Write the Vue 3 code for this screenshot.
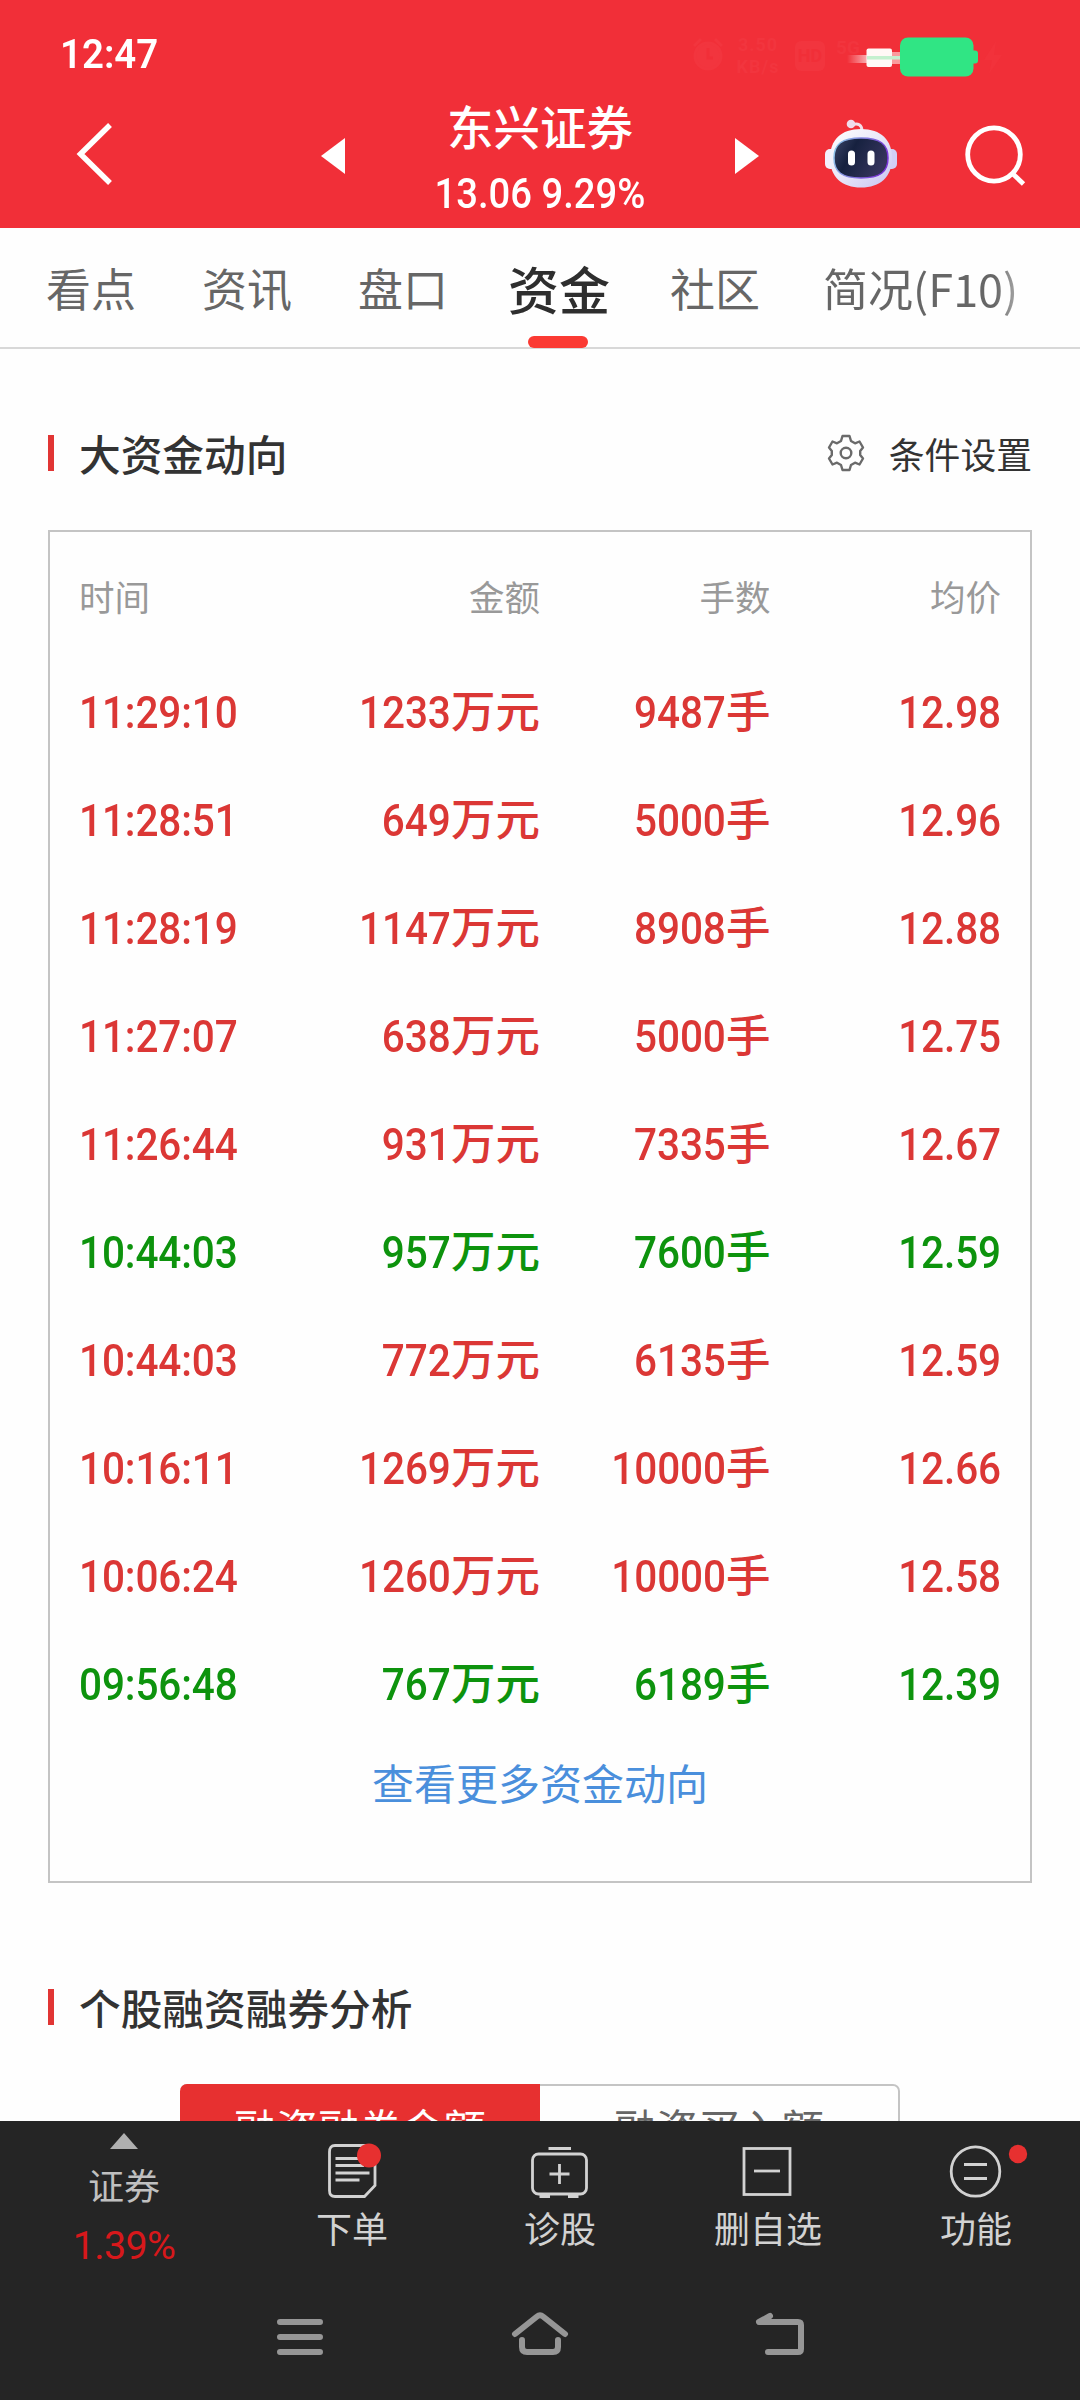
<template>
  <div class="page">
    <header class="top">
      <div class="status-bar">
        <span class="clock">12:47</span>
        <div class="status-right">
          <svg class="alarm" viewBox="0 0 30 32">
            <circle cx="15" cy="18" r="13" />
            <path d="M1 8 L8 1 M29 8 L22 1" />
            <path class="hand" d="M15 10 V20 H20" />
          </svg>
          <div class="speed">
            <span>3.50</span>
            <span>KB/s</span>
          </div>
          <span class="hd">HD</span>
          <span class="net">5G</span>
          <svg class="battery" viewBox="0 0 164 44">
            <defs>
              <linearGradient id="trail" x1="0" y1="0" x2="1" y2="0">
                <stop offset="0" stop-color="#fff" stop-opacity="0" />
                <stop offset="1" stop-color="#fff" stop-opacity="0.6" />
              </linearGradient>
            </defs>
            <rect x="8" y="17" width="20" height="8" fill="url(#trail)" />
            <rect x="52" y="14" width="10" height="12" fill="#fa9b9d" />
            <rect x="27.500" y="10.500" width="25.500" height="18.500" rx="2" fill="#fff8f6" />
            <rect x="28" y="18" width="34" height="3.500" fill="#c4f0cf" />
            <rect x="61" y="-0.500" width="73.500" height="39" rx="8" fill="#30e584" />
            <rect x="131" y="12.500" width="8" height="13" rx="3" fill="#30e584" />
            <path d="M157 3 L145 22 H153 L150 36 L163 17 H155 Z" fill="#f2323b" />
          </svg>
        </div>
      </div>

      <div class="nav">
        <svg class="back" viewBox="0 0 40 64">
          <path d="M35 3 L5.500 32 L35 61" />
        </svg>
        <div class="stock">
          <svg class="arrow" viewBox="0 0 24 36"><path d="M0 18 L24 0 V36 Z" /></svg>
          <div class="stock-info">
            <h1>东兴证券</h1>
            <p>13.06 9.29%</p>
          </div>
          <svg class="arrow" viewBox="0 0 24 36"><path d="M24 18 L0 0 V36 Z" /></svg>
        </div>
        <svg class="robot" viewBox="0 0 72 70">
          <defs>
            <linearGradient id="shell" x1="0" y1="0" x2="1" y2="1">
              <stop offset="0" stop-color="#ffffff" />
              <stop offset="0.5" stop-color="#e9e6f8" />
              <stop offset="1" stop-color="#c6c4f2" />
            </linearGradient>
            <linearGradient id="rim" x1="0" y1="0" x2="1" y2="0.3">
              <stop offset="0" stop-color="#8fd0e8" />
              <stop offset="1" stop-color="#7a35d8" />
            </linearGradient>
            <linearGradient id="screen" x1="0" y1="0" x2="1" y2="0.4">
              <stop offset="0" stop-color="#3c4568" />
              <stop offset="0.4" stop-color="#16213f" />
              <stop offset="1" stop-color="#35345c" />
            </linearGradient>
          </defs>
          <path d="M27 6 C33 3.500 37 6 37 12" fill="none" stroke="#f4dfe9" stroke-width="3" />
          <circle cx="26" cy="5" r="4.300" fill="#f0dcec" />
          <rect x="0" y="30" width="12" height="20" rx="5" fill="#f3effc" />
          <rect x="60" y="30" width="12" height="20" rx="5" fill="#d2cff5" />
          <path
            d="M36 10 C56 10 67 21 67 39 C67 58 55 68.500 36 68.500 C17 68.500 5 58 5 39 C5 21 16 10 36 10 Z"
            fill="url(#shell)"
          />
          <path
            d="M36 19 C55 19 63 25 63 39 C63 53 55 59 36 59 C17 59 9 53 9 39 C9 25 17 19 36 19 Z"
            fill="url(#screen)"
            stroke="url(#rim)"
            stroke-width="1.500"
          />
          <rect x="23" y="31.500" width="7" height="15" rx="3.500" fill="#fff" />
          <rect x="42.500" y="31.500" width="7" height="15" rx="3.500" fill="#fff" />
        </svg>
        <svg class="search" viewBox="0 0 62 62">
          <ellipse cx="30" cy="29.500" rx="26.300" ry="26.600" />
          <path d="M48.500 48.500 L59.500 59" />
        </svg>
      </div>
    </header>

    <nav class="tabs">
      <span
        v-for="tab in tabs"
        :key="tab"
        class="tab"
        :class="{ active: tab === activeTab }"
        @click="activeTab = tab"
      >{{ tab }}</span>
    </nav>

    <main class="content">
      <div class="section-head">
        <h2>大资金动向</h2>
        <div class="setting">
          <svg viewBox="0 0 36 36">
            <path
              d="M14.500 1 H21.500 L23 6 L27 8.300 L31.500 6.500 L35 12.500 L32.200 16 V20 L35 23.500 L31.500 29.500 L27 27.700 L23 30 L21.500 35 H14.500 L13 30 L9 27.700 L4.500 29.500 L1 23.500 L3.800 20 V16 L1 12.500 L4.500 6.500 L9 8.300 L13 6 Z"
            />
            <circle cx="18" cy="18" r="5.300" />
          </svg>
          <span>条件设置</span>
        </div>
      </div>

      <div class="fund-box">
        <div class="row head">
          <span>时间</span>
          <span>金额</span>
          <span>手数</span>
          <span>均价</span>
        </div>
        <div v-for="(item, i) in list" :key="i" class="row" :class="item.type">
          <span><b>{{ item.time }}</b></span>
          <span><b>{{ item.amount }}</b>万元</span>
          <span><b>{{ item.lots }}</b>手</span>
          <span><b>{{ item.price }}</b></span>
        </div>
        <div class="more">查看更多资金动向</div>
      </div>

      <div class="section-head second">
        <h2>个股融资融券分析</h2>
      </div>
      <div class="segment">
        <span class="seg on">融资融券金额</span>
        <span class="seg">融资买入额</span>
      </div>
    </main>

    <footer class="bottom">
      <div class="tools">
        <div class="index">
          <svg viewBox="0 0 28 16"><path d="M14 0 L28 16 H0 Z" /></svg>
          <span class="name">证券</span>
          <span class="rate">1.39%</span>
        </div>
        <div class="tool">
          <svg viewBox="0 0 60 60">
            <path d="M13 6.500 H46 Q53 6.500 53 13 V46.500 L42.500 57.500 H13 Q7.500 57.500 7.500 51.500 V13 Q7.500 6.500 13 6.500 Z" />
            <path d="M13.500 19.500 H38 M13.500 26.500 H42 M13.500 34 H47.500 M13.500 41 H37.500" />
            <circle class="dot" cx="47" cy="16.500" r="12" />
          </svg>
          <span>下单</span>
        </div>
        <div class="tool">
          <svg viewBox="0 0 60 60">
            <rect x="2.500" y="15" width="54" height="40" rx="6" />
            <path d="M18.500 9.500 H41 M29.500 25 V45 M19.500 35 H39.500" />
            <path d="M9.500 57.500 H20 M38 57.500 H48.500" />
          </svg>
          <span>诊股</span>
        </div>
        <div class="tool">
          <svg viewBox="0 0 60 60">
            <rect x="6" y="9.500" width="46" height="46" />
            <path d="M16 32 H42" />
          </svg>
          <span>删自选</span>
        </div>
        <div class="tool">
          <svg viewBox="0 0 60 60">
            <ellipse cx="29.500" cy="32.500" rx="24.300" ry="24.700" />
            <path d="M18 25.500 H41 M18 39.500 H41" />
            <circle class="dot" cx="72" cy="15" r="9.200" />
          </svg>
          <span>功能</span>
        </div>
      </div>

      <div class="sys-nav">
        <svg viewBox="0 0 60 50"><path d="M10 10 H50 M10 25 H50 M10 40 H50" /></svg>
        <svg viewBox="0 0 60 50"><path d="M5 22 L27 4.500 Q30 2 33 4.500 L55 22 M12 28 V35 Q12 40 17 40 H43 Q48 40 48 35 V28" /></svg>
        <svg viewBox="0 0 60 50"><path d="M20 4 L9 10 H48 Q51 10 51 13 V37 Q51 40 48 40 H18" /></svg>
      </div>
    </footer>
  </div>
</template>

<script setup>
import { ref } from 'vue'

const tabs = ['看点', '资讯', '盘口', '资金', '社区', '简况(F10)']
const activeTab = ref('资金')

// type: up 主动买入(红)，down 主动卖出(绿)
const list = ref([
  { time: '11:29:10', amount: 1233, lots: 9487, price: '12.98', type: 'up' },
  { time: '11:28:51', amount: 649, lots: 5000, price: '12.96', type: 'up' },
  { time: '11:28:19', amount: 1147, lots: 8908, price: '12.88', type: 'up' },
  { time: '11:27:07', amount: 638, lots: 5000, price: '12.75', type: 'up' },
  { time: '11:26:44', amount: 931, lots: 7335, price: '12.67', type: 'up' },
  { time: '10:44:03', amount: 957, lots: 7600, price: '12.59', type: 'down' },
  { time: '10:44:03', amount: 772, lots: 6135, price: '12.59', type: 'up' },
  { time: '10:16:11', amount: 1269, lots: 10000, price: '12.66', type: 'up' },
  { time: '10:06:24', amount: 1260, lots: 10000, price: '12.58', type: 'up' },
  { time: '09:56:48', amount: 767, lots: 6189, price: '12.39', type: 'down' }
])
</script>

<style>
body {
  margin: 0;
  background: #fff;
}
</style>

<style scoped>
.page {
  width: 1080px;
  height: 2400px;
  overflow: hidden;
  display: flex;
  flex-direction: column;
  background: #fefefe;
  font-family: "Noto Sans CJK SC", sans-serif;
  color: #333;
}

h1,
h2,
p {
  margin: 0;
}

svg {
  display: block;
  flex: none;
  overflow: visible;
}

.top {
  height: 228px;
  flex: none;
  background: #f12f38;
  color: #fff;
}

.status-bar {
  height: 108px;
  box-sizing: border-box;
  padding: 34px 77px 0 60px;
  display: flex;
  justify-content: space-between;
}

.clock {
  font: 600 40px/42px Roboto, sans-serif;
  transform: scaleX(0.96);
  transform-origin: left;
}

.status-right {
  display: flex;
  align-items: flex-start;
  padding-top: 4px;
  color: #f2353e;
  font-family: Roboto, sans-serif;
  font-weight: 700;
}

.alarm {
  width: 30px;
  height: 32px;
  fill: #f2353e;
  stroke: #f2353e;
  stroke-width: 3;
}

.alarm .hand {
  fill: none;
  stroke: #f12f38;
}

.speed {
  width: 50px;
  margin: -4px 0 0 10px;
  display: flex;
  flex-direction: column;
  align-items: center;
  font-size: 18px;
  line-height: 22px;
  letter-spacing: 1px;
}

.hd {
  width: 30px;
  margin: 3px 0 0 12px;
  border-radius: 6px;
  background: #f2353e;
  color: #f12f38;
  font-size: 18px;
  line-height: 30px;
  text-align: center;
}

.net {
  width: 26px;
  margin: 0 -23px 0 11px;
  font-size: 19px;
  line-height: 20px;
}

.battery {
  width: 164px;
  height: 44px;
}

.nav {
  height: 120px;
  display: flex;
  padding-left: 75px;
}

.back {
  width: 40px;
  height: 64px;
  margin-top: 14px;
  fill: none;
  stroke: #fff;
  stroke-width: 5.5;
}

.stock {
  width: 438px;
  margin-left: 206px;
  display: flex;
  justify-content: space-between;
}

.arrow {
  width: 24px;
  height: 36px;
  margin-top: 30px;
  fill: #fff;
}

.stock-info {
  text-align: center;
}

.stock-info h1 {
  font-size: 46.5px;
  font-weight: 500;
  line-height: 50px;
  margin-top: -8px;
}

.stock-info p {
  font: 500 42px/50px Roboto, sans-serif;
  margin: 19px -20px 0;
  transform: scaleX(0.91);
}

.robot {
  width: 72px;
  height: 70px;
  margin: 11px 0 0 66px;
}

.search {
  width: 62px;
  height: 62px;
  margin: 17px 0 0 67px;
  fill: none;
  stroke: #fff;
  stroke-width: 4.8;
}

.tabs {
  height: 119px;
  flex: none;
  display: flex;
  gap: 66px;
  padding-left: 46px;
  border-bottom: 2px solid #d8d8d8;
}

.tab {
  position: relative;
  font-size: 45px;
  line-height: 120px;
  color: #666;
  white-space: nowrap;
}

.tab:last-child {
  margin-left: -3px;
  background: linear-gradient(90deg, #666 88%, #aaa);
  background-clip: text;
  color: transparent;
}

.tab.active {
  margin: 0 -6px;
  font-size: 51px;
  font-weight: 500;
  color: #2e2e2e;
}

.tab.active::after {
  content: "";
  position: absolute;
  left: 50%;
  bottom: -1px;
  width: 60px;
  height: 12px;
  margin-left: -31px;
  border-radius: 6px;
  background: #fb3a33;
}

.content {
  height: 1772px;
  flex: none;
  overflow: hidden;
}

.section-head {
  display: flex;
  align-items: center;
  justify-content: space-between;
  height: 60px;
  margin: 74px 48px 0;
}

.section-head h2 {
  display: flex;
  align-items: center;
  font-size: 41.7px;
  line-height: 60px;
  font-weight: 500;
}

.section-head h2::before {
  content: "";
  width: 6px;
  height: 36px;
  margin-right: 25px;
  background: #e13534;
}

.setting {
  display: flex;
  align-items: center;
  gap: 25px;
  font-size: 35.8px;
  line-height: 60px;
}

.setting svg {
  width: 36px;
  height: 36px;
  fill: none;
  stroke: #6a6a6a;
  stroke-width: 2.4;
  stroke-linejoin: round;
}

.fund-box {
  height: 1353px;
  box-sizing: border-box;
  margin: 47px 48px 0;
  padding: 10px 29px 0 29px;
  border: 2px solid #c4c4c4;
}

.row {
  display: grid;
  grid-template-columns: repeat(4, 1fr);
  height: 108px;
  font-size: 44.5px;
  line-height: 108px;
  font-weight: 500;
  text-align: right;
}

.row span:first-child {
  text-align: left;
}

.row b {
  display: inline-block;
  font-family: Roboto, sans-serif;
  font-weight: 500;
  letter-spacing: -0.1px;
  transform: scaleX(0.91);
  transform-origin: right;
}

.row span:first-child b {
  transform-origin: left;
}

.row.head {
  height: 113px;
  font-size: 35.5px;
  font-weight: 400;
  color: #999;
}

.row.up {
  color: #db3735;
}

.row.down {
  color: #0d930d;
}

.more {
  font-size: 42px;
  line-height: 60px;
  margin-top: 17px;
  text-align: center;
  color: #4a8fdc;
}

.section-head.second {
  margin-top: 94px;
}

.segment {
  display: flex;
  width: 720px;
  height: 86px;
  box-sizing: border-box;
  margin: 47px auto 0;
  border: 2px solid #c4c4c4;
  border-left: none;
  border-radius: 7px;
}

.seg {
  flex: 1;
  font-size: 42px;
  line-height: 82px;
  text-align: center;
  color: #666;
}

.seg.on {
  flex: none;
  width: 360px;
  margin: -2px 0;
  line-height: 86px;
  border-radius: 7px 0 0 7px;
  background: #e73030;
  color: #fff;
}

.bottom {
  flex: 1;
  background: #252525;
  color: #d2d2d2;
}

.tools {
  display: grid;
  grid-template-columns: 248px repeat(4, 208px);
  height: 159px;
  font-size: 36px;
}

.index,
.tool {
  display: flex;
  flex-direction: column;
  align-items: center;
}

.index svg {
  width: 28px;
  height: 16px;
  margin-top: 12px;
  fill: #b0b0b0;
}

.index .name {
  margin-top: 15px;
  line-height: 40px;
  color: #c0c0c0;
}

.index .rate {
  margin-top: 22px;
  font: 400 39.5px/40px Roboto, sans-serif;
  letter-spacing: -0.7px;
  color: #d7181b;
}

.tool svg {
  width: 60px;
  height: 60px;
  margin-top: 18px;
  fill: none;
  stroke: #d2d2d2;
  stroke-width: 2.8;
}

.tool svg .dot {
  fill: #e73030;
  stroke: none;
}

.tool span {
  margin-top: 8px;
  line-height: 40px;
}

.sys-nav {
  display: flex;
  justify-content: center;
  gap: 180px;
  padding-top: 32px;
}

.sys-nav svg {
  width: 60px;
  height: 50px;
  fill: none;
  stroke: #969696;
  stroke-width: 6;
  stroke-linecap: round;
  stroke-linejoin: round;
}
</style>
